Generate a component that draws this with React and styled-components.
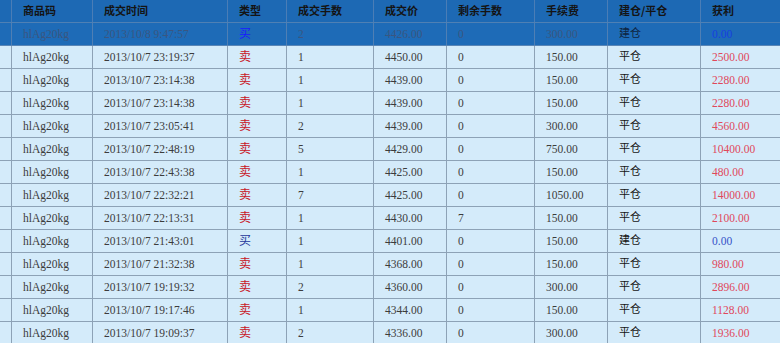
import React from "react";
import styled, { createGlobalStyle } from "styled-components";

const Global = createGlobalStyle`
  html, body { margin: 0; padding: 0; background: #d4ebfa; }
  body { font-family: "Liberation Serif", "Noto Sans CJK SC", serif; }
`;

const COLS = "12px 81px 135px 59px 87px 73px 88px 73px 93px 80px";

const Table = styled.div`
  width: 780px;
  height: 343px;
  overflow: hidden;
  background: #d4ebfa;
`;

const HeadRow = styled.div`
  display: grid;
  grid-template-columns: ${COLS};
  height: 23px;
  background: #1d69b4;
  border-bottom: 1px solid #4f80b4;
  box-sizing: border-box;
`;

const HeadCell = styled.div`
  border-right: 1px solid #4a7db6;
  padding-left: 11px;
  display: flex;
  align-items: center;
  font-family: "Noto Sans CJK SC", sans-serif;
  font-weight: 700;
  font-size: 11px;
  color: #141414;
  white-space: nowrap;
  padding-bottom: 2px;
  box-sizing: border-box;
`;

const Row = styled.div`
  display: grid;
  grid-template-columns: ${COLS};
  height: 23px;
  box-sizing: border-box;
  background: ${(p) => (p.$sel ? "#1e6bb7" : "#d4ebfa")};
  border-bottom: 1px solid ${(p) => (p.$sel ? "#5a86b6" : "#8da2b6")};
`;

const Cell = styled.div`
  border-right: 1px solid ${(p) => (p.$sel ? "#4f7fb4" : "#8da2b6")};
  padding-left: 11px;
  display: flex;
  align-items: center;
  font-family: "Liberation Serif", "Noto Sans CJK SC", serif;
  font-size: 11.5px;
  color: ${(p) => (p.$sel ? "#3a5680" : "#3c3c3c")};
  white-space: nowrap;
  box-sizing: border-box;
`;

const Kind = styled(Cell)`
  font-family: "Noto Sans CJK SC", sans-serif;
  font-size: 12px;
  padding-bottom: 4px;
  color: ${(p) => (p.$buy ? (p.$sel ? "#1a1aff" : "#25359a") : "#c8141e")};
`;

const OpenClose = styled(Cell)`
  font-family: "Noto Sans CJK SC", sans-serif;
  font-size: 11px;
  padding-bottom: 4px;
  color: ${(p) => (p.$sel ? "#0e2440" : "#141414")};
`;

const Profit = styled(Cell)`
  color: ${(p) =>
    p.$zero ? (p.$sel ? "#1640e0" : "#3552c8") : "#e0485a"};
`;

const headers = ["", "商品码", "成交时间", "类型", "成交手数", "成交价", "剩余手数", "手续费", "建仓/平仓", "获利"];

const rows = [
  ["2013/10/8 9:47:57", "买", "2", "4426.00", "0", "300.00", "建仓", "0.00"],
  ["2013/10/7 23:19:37", "卖", "1", "4450.00", "0", "150.00", "平仓", "2500.00"],
  ["2013/10/7 23:14:38", "卖", "1", "4439.00", "0", "150.00", "平仓", "2280.00"],
  ["2013/10/7 23:14:38", "卖", "1", "4439.00", "0", "150.00", "平仓", "2280.00"],
  ["2013/10/7 23:05:41", "卖", "2", "4439.00", "0", "300.00", "平仓", "4560.00"],
  ["2013/10/7 22:48:19", "卖", "5", "4429.00", "0", "750.00", "平仓", "10400.00"],
  ["2013/10/7 22:43:38", "卖", "1", "4425.00", "0", "150.00", "平仓", "480.00"],
  ["2013/10/7 22:32:21", "卖", "7", "4425.00", "0", "1050.00", "平仓", "14000.00"],
  ["2013/10/7 22:13:31", "卖", "1", "4430.00", "7", "150.00", "平仓", "2100.00"],
  ["2013/10/7 21:43:01", "买", "1", "4401.00", "0", "150.00", "建仓", "0.00"],
  ["2013/10/7 21:32:38", "卖", "1", "4368.00", "0", "150.00", "平仓", "980.00"],
  ["2013/10/7 19:19:32", "卖", "2", "4360.00", "0", "300.00", "平仓", "2896.00"],
  ["2013/10/7 19:17:46", "卖", "1", "4344.00", "0", "150.00", "平仓", "1128.00"],
  ["2013/10/7 19:09:37", "卖", "2", "4336.00", "0", "300.00", "平仓", "1936.00"],
];

export default function App() {
  return (
    <>
      <Global />
      <Table>
        <HeadRow>
          {headers.map((h, i) => (
            <HeadCell key={i}>{h}</HeadCell>
          ))}
        </HeadRow>
        {rows.map((r, i) => {
          const sel = i === 0;
          const [time, kind, qty, price, left, fee, oc, profit] = r;
          return (
            <Row key={i} $sel={sel}>
              <Cell $sel={sel} />
              <Cell $sel={sel}>hlAg20kg</Cell>
              <Cell $sel={sel}>{time}</Cell>
              <Kind $sel={sel} $buy={kind === "买"}>{kind}</Kind>
              <Cell $sel={sel}>{qty}</Cell>
              <Cell $sel={sel}>{price}</Cell>
              <Cell $sel={sel}>{left}</Cell>
              <Cell $sel={sel}>{fee}</Cell>
              <OpenClose $sel={sel}>{oc}</OpenClose>
              <Profit $sel={sel} $zero={profit === "0.00"}>{profit}</Profit>
            </Row>
          );
        })}
      </Table>
    </>
  );
}
